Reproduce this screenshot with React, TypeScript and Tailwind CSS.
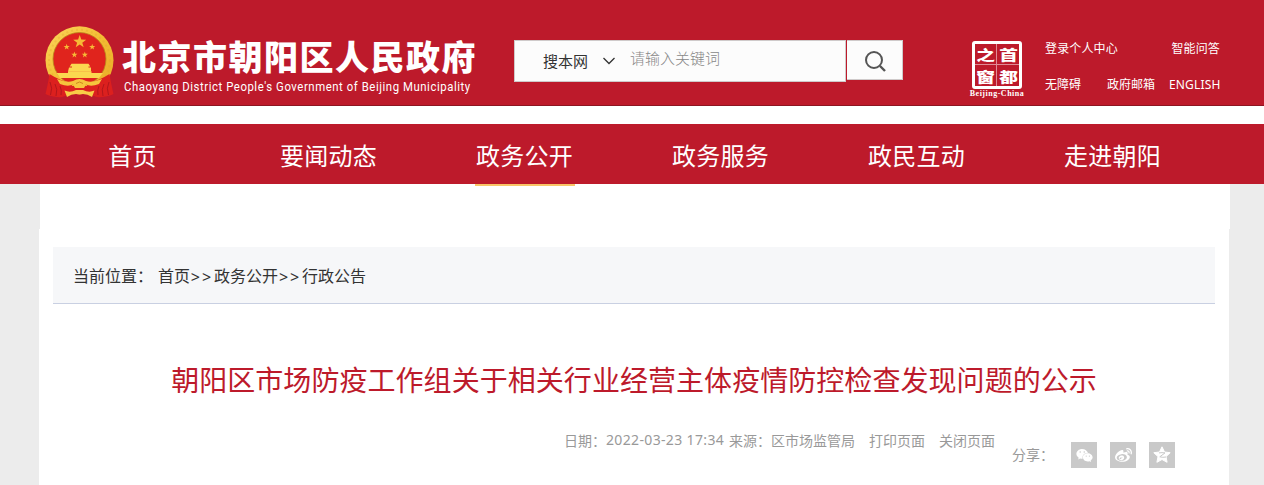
import { Fragment } from "react";
import { FaWeixin, FaWeibo } from "react-icons/fa";

const NAV_ITEMS = ["首页", "要闻动态", "政务公开", "政务服务", "政民互动", "走进朝阳"];
const ACTIVE_NAV = "政务公开";
const CRUMBS = ["首页", "政务公开", "行政公告"];

function starPoints(cx: number, cy: number, r: number) {
  return Array.from({ length: 10 }, (_, i) => {
    const radius = i % 2 ? r * 0.4 : r;
    const a = (Math.PI / 5) * i - Math.PI / 2;
    return `${(cx + radius * Math.cos(a)).toFixed(2)},${(cy + radius * Math.sin(a)).toFixed(2)}`;
  }).join(" ");
}

function Emblem() {
  return (
    <svg width="70" height="72" viewBox="0 0 70 72" className="shrink-0">
      <defs>
        <linearGradient id="gold" x1="0" y1="0" x2="1" y2="1">
          <stop offset="0" stopColor="#fbd65c" />
          <stop offset="0.5" stopColor="#f3bd33" />
          <stop offset="1" stopColor="#e8aa27" />
        </linearGradient>
      </defs>
      <circle cx="34.5" cy="34.3" r="34" fill="url(#gold)" />
      <circle cx="34.5" cy="34.3" r="30.5" fill="none" stroke="#dfa228" strokeWidth="2" strokeDasharray="2 3" opacity="0.3" />
      <circle cx="34.5" cy="33" r="26.5" fill="#e0241d" stroke="#b98a1c" strokeWidth="0.8" />
      <g fill="#f6b936">
        <polygon points={starPoints(34.7, 15.8, 6.8)} />
        <polygon points={starPoints(21.7, 21, 3.2)} />
        <polygon points={starPoints(47.2, 21, 3.2)} />
        <polygon points={starPoints(29.4, 28.8, 3.2)} />
        <polygon points={starPoints(39.8, 28.8, 3.2)} />
      </g>
      {/* gate tower */}
      <g fill="#fbd84f">
        <path d="M26.500 37.800h17l1.800 2.700h-20.600z M27 40.500h16.500v1h-16.500z M24 41.500h22v4h-23z" />
        <path d="M23 45.300h23.500v1.700H58l-4 5H15l-3.500-5H23z" />
      </g>
      {/* ribbons */}
      <path d="M4.500 48Q14 54 27 58L26 67Q19 72 12 71Q4 70 0.500 68Q2.500 60 4.500 48z" fill="#dc201e" />
      <path d="M64.500 48Q55 54 42 58L43 67Q50 72 57 71Q65 70 68.500 68Q66.500 60 64.500 48z" fill="#dc201e" />
      <path d="M5 56q3 6 .5 13M10 58q3 5 1 12M15 60q2 4 1 9M64 56q-3 6-.5 13M59 58q-3 5-1 12M54 60q-2 4-1 9" stroke="#ad151b" strokeWidth="0.9" fill="none" />
      {/* gear and lower scroll */}
      <path d="M26 60h17v6H26z" fill="#dc201e" />
      <path d="M12 53Q22 57 28 55Q34.500 51 41 55Q47 57 57 53L54 58Q46 61 41 58.500L39 62H30L28 58.500Q23 61 15 58z" fill="#f6c43d" />
      <path d="M31 57.500q3.500-3 7 0" stroke="#cf861f" strokeWidth="1" fill="none" />
      <path d="M19.500 64.500Q25 67 31 64h7Q44 67 49.500 64.500L47 71Q41 67 34.500 68.500Q28 67 22 71z" fill="#f8cd47" />
    </svg>
  );
}

function CapitalWindow() {
  return (
    <a className="flex w-[54px] shrink-0 flex-col items-center text-white">
      <div className="grid h-[48px] w-[50px] grid-cols-2 grid-rows-2 rounded-[3px] border-[3px] border-white text-[17px] font-bold leading-[20px]">
        <span className="flex items-center justify-center border-r border-b border-[#e08b95]"><b className="inline-block scale-x-110 scale-y-80">之</b></span>
        <span className="flex items-center justify-center border-b border-[#e08b95]"><b className="inline-block scale-x-110 scale-y-80">首</b></span>
        <span className="flex items-center justify-center border-r border-[#e08b95]"><b className="inline-block scale-x-110 scale-y-80">窗</b></span>
        <span className="flex items-center justify-center"><b className="inline-block scale-x-110 scale-y-80">都</b></span>
      </div>
      <span className="whitespace-nowrap font-['Liberation_Serif',serif] text-[8px] font-bold leading-[9px] tracking-[0.5px]">Beijing-China</span>
    </a>
  );
}

function Qzone() {
  return (
    <svg width="18" height="18" viewBox="0 0 18 18">
      <path d="M9 .8l2.500 5.200 5.700.7-4.200 3.900 1.100 5.700L9 13.500l-5.100 2.800L5 10.600.8 6.700l5.700-.7z" fill="#fff" stroke="#fff" strokeLinejoin="round" />
      <path d="M6 6.900q3-.5 6 0L6.800 10.800q3 .9 6.200.2" fill="none" stroke="#c9c9c9" strokeWidth="1" />
    </svg>
  );
}

function Header() {
  return (
    <header className="h-[106px] border-b border-[#8d1522] bg-[#bd1a2b]">
      <div className="flex items-start pl-[45px]">
        <div className="flex pt-[26px]">
          <Emblem />
          <div className="ml-[7px] w-[392px] whitespace-nowrap text-white">
            <h1 className="mt-[8px] h-[44px] text-[34px] font-black leading-[44px] tracking-[1.5px]">北京市朝阳区人民政府</h1>
            <p className="ml-[2px] origin-left scale-x-[0.874] font-[Roboto,sans-serif] text-[13px] leading-[18px] tracking-[0.64px]">
              Chaoyang District People's Government of Beijing Municipality
            </p>
          </div>
        </div>
        <form className="mt-[40px] flex items-start">
          <div className="flex h-[42px] w-[332px] border border-[#cfcaca] bg-[#fcfcfc]">
            <div className="flex items-center pl-[28px] text-[15px] text-[#333]">
              搜本网
              <svg width="14" height="8" viewBox="0 0 14 8" className="ml-[14px]">
                <path d="M1.500 1L7 6.500 12.500 1" fill="none" stroke="#333" strokeWidth="1.300" />
              </svg>
            </div>
            <span className="ml-[14px] pt-[6px] text-[15px] font-light leading-[22px] text-[#888]">请输入关键词</span>
          </div>
          <button type="button" className="ml-px flex h-10 w-[56px] items-center justify-center border-t border-r border-b border-[#cfcaca] bg-[#fcfcfc]">
            <svg width="24" height="24" viewBox="0 0 24 24" fill="none" stroke="#555" strokeWidth="2" className="mt-[2px]">
              <circle cx="11" cy="11" r="8" />
              <path d="M17 17l5 5" strokeWidth="2.400" />
            </svg>
          </button>
        </form>
        <div className="ml-[67px] mt-[41px]">
          <CapitalWindow />
        </div>
        <div className="ml-[21px] mt-[39px] w-[175px] whitespace-nowrap text-[12px] leading-[18px] text-white">
          <div className="flex justify-between tracking-[0.15px]">
            <a>登录个人中心</a>
            <a>智能问答</a>
          </div>
          <div className="mt-[18px] flex">
            <a>无障碍</a>
            <a className="ml-[26px]">政府邮箱</a>
            <a className="ml-[14px] pt-px font-['Noto_Sans',sans-serif] tracking-[0.15px]">ENGLISH</a>
          </div>
        </div>
      </div>
    </header>
  );
}

function Nav() {
  return (
    <nav className="mt-[18px] flex h-[60px] bg-[#bd1a2b] pl-[34px]">
      {NAV_ITEMS.map(item => (
        <a key={item} className="flex h-[62px] w-[197px] shrink-0 -mr-px flex-col items-center text-2xl tracking-[0.25px] text-white">
          <span className="h-[60px] leading-[61px]">{item}</span>
          {item === ACTIVE_NAV && <span className="relative z-10 h-[2px] w-[100px] bg-[#f9c567]" />}
        </a>
      ))}
    </nav>
  );
}

function Share() {
  return (
    <div className="flex h-[26px] items-center">
      <span className="w-[59px] leading-[24px] pb-[2px]">分享：</span>
      <div className="flex gap-[13px] text-white">
        <a className="flex size-[26px] items-center justify-center bg-[#c9c9c9]"><FaWeixin size={17} /></a>
        <a className="flex size-[26px] items-center justify-center bg-[#c9c9c9]"><FaWeibo size={17} /></a>
        <a className="flex size-[26px] items-center justify-center bg-[#c9c9c9]"><Qzone /></a>
      </div>
    </div>
  );
}

export default function App() {
  return (
    <div className="h-[485px] w-[1264px] overflow-hidden bg-white font-['Noto_Sans_CJK_SC',sans-serif]">
      <Header />
      <Nav />
      <div className="h-[301px] bg-[#ececec]">
        <div className="ml-[40px] h-[45px] w-[1190px] bg-white" />
        <main className="ml-[39px] h-[256px] w-[1190px] bg-white px-[14px] pt-[18px]">
          <div className="flex h-[57px] items-center whitespace-nowrap border-b border-[#c9d0e2] bg-[#f6f7f9] pl-5 text-base text-[#333]">
            <span className="w-[85px]">当前位置：</span>
            {CRUMBS.map((c, i) => (
              <Fragment key={c}>
                {i > 0 && <span className="w-[24px] pt-[3px] text-center font-['Noto_Sans',sans-serif] tracking-[2px]">&gt;&gt;</span>}
                <a>{c}</a>
              </Fragment>
            ))}
          </div>
          <h2 className="mt-[54px] whitespace-nowrap text-center text-[28px] leading-[42px] tracking-[0.05px] text-[#bd1a2b]">
            朝阳区市场防疫工作组关于相关行业经营主体疫情防控检查发现问题的公示
          </h2>
          <div className="ml-[511px] mt-[29px] flex whitespace-nowrap text-sm text-[#999]">
            <div className="flex w-[448px] leading-[22px]">
              <span>日期：</span>
              <span className="w-[123px] font-['Noto_Sans',sans-serif] tracking-[0.35px]">2022-03-23 17:34</span>
              <span>来源：区市场监管局</span>
              <a className="ml-[14px]">打印页面</a>
              <a className="ml-[14px]">关闭页面</a>
            </div>
            <div className="mt-[13px]">
              <Share />
            </div>
          </div>
        </main>
      </div>
    </div>
  );
}
